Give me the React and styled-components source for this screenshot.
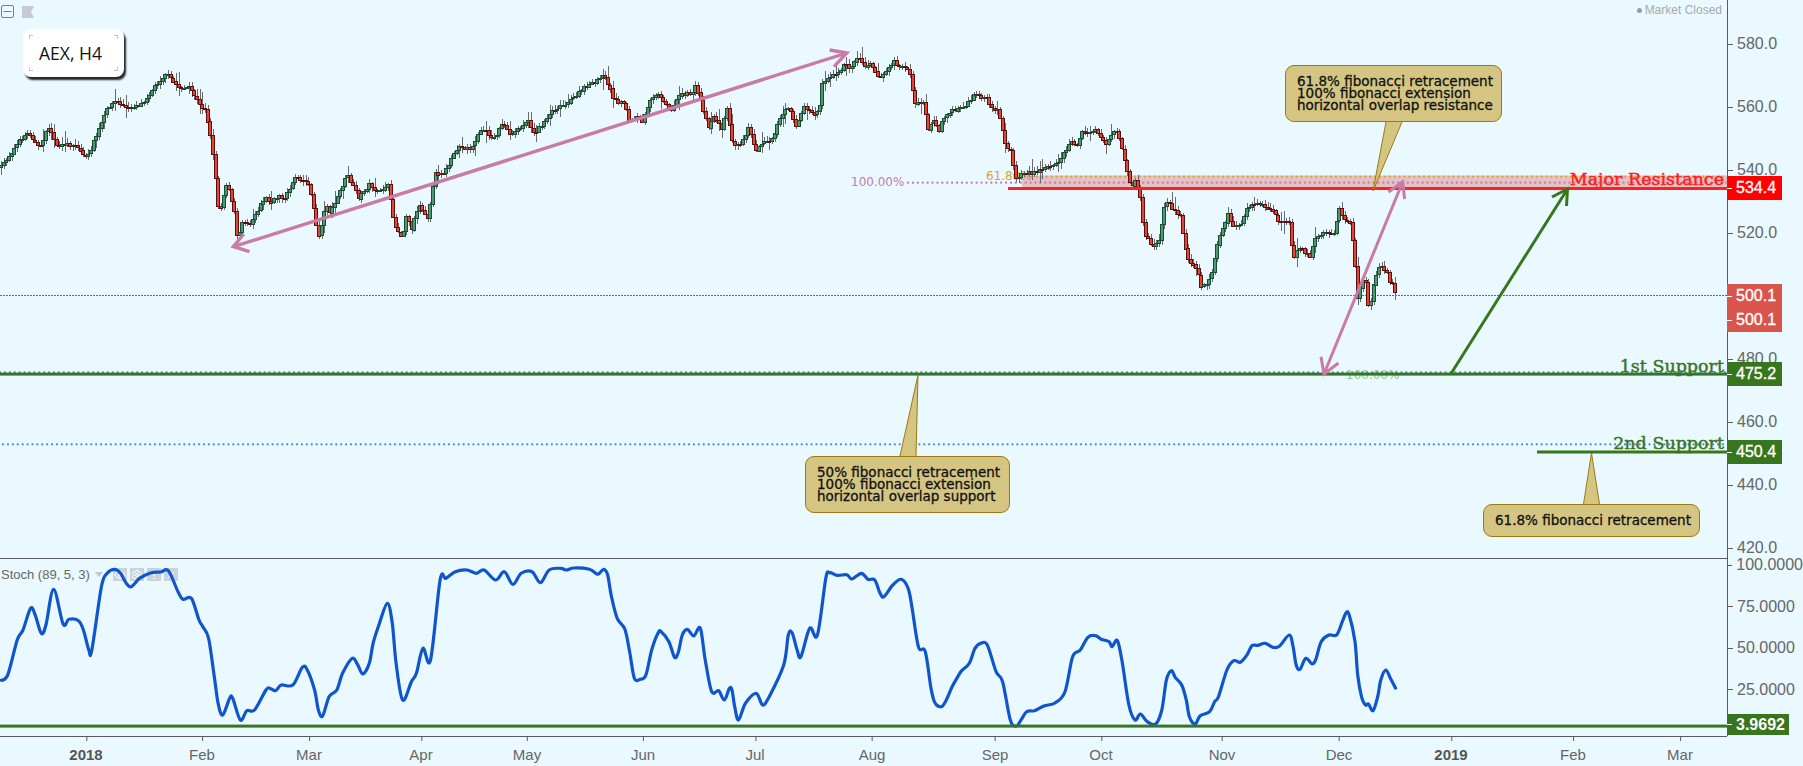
import React from "react";
import styled, { createGlobalStyle } from "styled-components";
import { Eye, Settings, MoreVertical, X } from "lucide-react";

const colors = {
    background: "#e9f9ff",
    line: "#5a5a5a",
    text: "#666666",
    pink: "#c97ba6",
    green: "#38761d",
    red: "#ff2020",
    blue: "#4a86e8",
    gold: "#e0a030",
    note: "#d4c682",
    noteBorder: "#9c7a10",
    candleUp: "#4c9a72",
    candleUpEdge: "#1c4a32",
    candleDown: "#e8452f",
    candleDownEdge: "#5a1010",
};

const GlobalStyle = createGlobalStyle`
    html, body {
        margin: 0;
        padding: 0;
        background: ${colors.background};
        overflow: hidden;
    }
    body {
        font-family: "Liberation Sans", Arial, sans-serif;
    }
`;

// the picture was read off zoomed crops, so keep points in crop units and scale them here
const crop = (offX, offY, sx, pts) => pts.map(([x, y]) => [offX + x / sx, offY + y / 3]);

const pricePath = [
    ...crop(0, 0, 2.613, [[0,500],[25,460],[60,405],[75,400],[100,445],[125,380],[150,445],[165,430],[195,435],[225,475],[250,405],[280,320],[300,300],[330,325],[370,308],[400,260],[430,220],[465,262],[495,265],[520,315],[535,325],[555,465],[570,640],[590,545],[610,640],[618,720],[630,660],[650,670],[690,590],[705,610],[730,580],[740,600],[770,525],[805,550],[830,710],[850,610],[860,640],[905,525],[935,590],[965,550],[985,580],[1010,550],[1030,680],[1050,710],[1060,640],[1072,690],[1092,610],[1115,650],[1135,520],[1160,515],[1195,440],[1230,445],[1255,385],[1290,415],[1310,365],[1330,405],[1375,360],[1395,400],[1440,330],[1490,300],[1530,255],[1550,250]]),
    ...crop(600, 0, 2.613, [[0,225],[15,240],[35,300],[65,310],[70,365],[100,350],[105,380],[128,295],[145,280],[165,300],[183,335],[205,280],[235,280],[248,255],[265,320],[280,380],[295,345],[315,385],[330,325],[345,430],[365,430],[385,385],[405,450],[425,420],[445,420],[470,350],[492,315],[510,380],[530,320],[558,340],[570,330],[580,240],[605,225],[620,220],[635,190],[650,205],[670,170],[690,195],[705,185],[728,235],[765,185],[790,205],[805,205],[820,310],[845,305],[855,395],[870,355],[885,395],[890,360],[920,330],[955,315],[975,285],[1005,290],[1025,335],[1040,330],[1055,430],[1070,450],[1085,540],[1100,515],[1130,520],[1155,505],[1200,480],[1225,425],[1245,430],[1255,395],[1280,400],[1290,385],[1320,430],[1340,395],[1350,400],[1370,490],[1385,565],[1395,540],[1410,590],[1420,700],[1445,740],[1460,715],[1475,600],[1515,650],[1530,770],[1555,800]]),
    ...crop(1200, 0, 2.6, [[3,864],[16,846],[29,816],[45,720],[70,640],[80,675],[105,675],[120,620],[150,610],[180,625],[205,665],[228,665],[240,780],[255,740],[285,770],[295,715],[320,695],[345,700],[360,625],[372,660],[388,665]]),
    ...[[0,85],[10,170],[20,300],[32,240],[45,250],[55,335],[65,270],[78,210],[88,195],[105,210],[115,240],[125,255],[135,288]].map(([x, y]) => [1350 + x / 3, 200 + y / 3]),
];

const stochPath = [
    ...crop(0, 550, 2.613, [[0,392],[20,375],[45,270],[60,240],[80,175],[92,195],[108,250],[120,225],[140,118],[165,222],[180,208],[205,212],[218,240],[232,300],[240,300],[265,110],[280,70],[300,58],[315,70],[330,100],[343,110],[365,85],[395,68],[420,66],[440,62],[465,125],[478,148],[500,145],[520,210],[530,230],[545,265],[560,380],[570,460],[582,495],[600,445],[608,445],[628,510],[645,482],[665,480],[695,420],[705,415],[720,422],[735,405],[765,405],[790,352],[803,360],[822,420],[832,480],[843,498],[860,440],[880,420],[895,370],[920,325],[935,345],[948,372],[965,340],[975,280],[990,225],[1012,160],[1025,220],[1035,340],[1052,450],[1075,395],[1088,370],[1105,295],[1125,330],[1150,90],[1165,85],[1190,65],[1220,60],[1245,70],[1265,60],[1295,90],[1318,65],[1340,103],[1362,70],[1390,65],[1412,98],[1435,60],[1465,55],[1480,60],[1500,54],[1540,58],[1560,72]]),
    ...crop(600, 550, 2.613, [[0,68],[10,58],[20,75],[30,140],[45,205],[65,238],[78,310],[90,385],[105,388],[120,375],[135,300],[152,248],[160,245],[180,275],[195,322],[205,305],[215,255],[228,238],[245,258],[262,235],[275,330],[292,425],[310,422],[325,450],[338,415],[345,420],[352,470],[362,510],[380,460],[408,430],[425,465],[442,440],[480,345],[492,255],[502,248],[515,300],[525,320],[548,235],[568,255],[590,85],[600,68],[620,76],[645,74],[658,87],[683,70],[700,88],[718,90],[732,130],[742,140],[765,105],[787,88],[805,115],[815,170],[832,290],[850,305],[865,415],[875,458],[892,470],[905,450],[920,410],[935,380],[945,362],[965,340],[980,295],[995,280],[1012,285],[1035,365],[1052,395],[1072,510],[1088,528],[1100,510],[1115,485],[1135,482],[1160,468],[1190,458],[1215,425],[1235,320],[1255,300],[1275,262],[1295,257],[1310,268],[1330,275],[1338,290],[1352,272],[1365,340],[1382,465],[1398,510],[1412,492],[1430,515],[1452,522],[1468,480],[1480,390],[1493,362],[1503,382],[1520,405],[1532,450],[1540,500],[1555,522]]),
    ...crop(1200, 550, 2.6, [[0,498],[25,485],[38,455],[48,440],[70,360],[88,332],[105,337],[122,315],[135,287],[150,286],[170,280],[190,292],[207,288],[232,255],[242,290],[250,345],[260,358],[275,325],[292,342],[302,325],[315,275],[335,255],[355,255],[370,215],[380,188],[388,195],[403,275],[410,375],[420,440],[430,465],[438,462],[450,482],[462,440],[470,390],[483,360],[495,385],[510,418]]),
];

const priceAt = (x) => {
    for (let i = 1; i < pricePath.length; i++) {
        const [x0, y0] = pricePath[i - 1];
        const [x1, y1] = pricePath[i];
        if (x <= x1) return y0 + ((y1 - y0) * (x - x0)) / (x1 - x0 || 1);
    }
    return pricePath[pricePath.length - 1][1];
};

const makeCandles = () => {
    let seed = 7;
    const rnd = () => {
        seed = (seed * 16807) % 2147483647;
        return seed / 2147483647;
    };
    const list = [];
    const step = 2.65;
    let prev = priceAt(0);
    for (let x = 0; x <= 1395; x += step) {
        const close = priceAt(x) + (rnd() - 0.5) * 3.6;
        const top = Math.min(prev, close);
        const bottom = Math.max(prev, close);
        const big = rnd() > 0.8 ? 8 : 0;
        list.push({
            x: Math.round(x) + 0.5,
            top: Math.round(top) + 0.5,
            height: Math.max(1, Math.round(bottom - top)),
            high: top - 1 - rnd() * 4 - big * rnd(),
            low: bottom + 1 + rnd() * 4 + big * rnd(),
            up: close < prev,
        });
        prev = close;
    }
    return list;
};

const candles = makeCandles();
const toPoints = (pts) => pts.map(([x, y]) => `${x.toFixed(1)},${y.toFixed(1)}`).join(" ");

// catmull-rom, the stochastic line in the picture has no corners
const toCurve = (pts) => {
    let d = `M${pts[0][0].toFixed(1)} ${pts[0][1].toFixed(1)}`;
    for (let i = 0; i < pts.length - 1; i++) {
        const p0 = pts[i - 1] || pts[i];
        const p1 = pts[i];
        const p2 = pts[i + 1];
        const p3 = pts[i + 2] || p2;
        const c1x = p1[0] + (p2[0] - p0[0]) / 6;
        const c1y = p1[1] + (p2[1] - p0[1]) / 6;
        const c2x = p2[0] - (p3[0] - p1[0]) / 6;
        const c2y = p2[1] - (p3[1] - p1[1]) / 6;
        d += `C${c1x.toFixed(1)} ${c1y.toFixed(1)} ${c2x.toFixed(1)} ${c2y.toFixed(1)} ${p2[0].toFixed(1)} ${p2[1].toFixed(1)}`;
    }
    return d;
};

const priceTicks = ["580.0", "560.0", "540.0", "520.0", "500.0", "480.0", "460.0", "440.0", "420.0"];
const stochTicks = ["100.0000", "75.0000", "50.0000", "25.0000"];
const timeTicks = [
    { x: 86, label: "2018", strong: true },
    { x: 202, label: "Feb" },
    { x: 309, label: "Mar" },
    { x: 421, label: "Apr" },
    { x: 527, label: "May" },
    { x: 643, label: "Jun" },
    { x: 755, label: "Jul" },
    { x: 872, label: "Aug" },
    { x: 995, label: "Sep" },
    { x: 1101, label: "Oct" },
    { x: 1222, label: "Nov" },
    { x: 1339, label: "Dec" },
    { x: 1451, label: "2019", strong: true },
    { x: 1573, label: "Feb" },
    { x: 1680, label: "Mar" },
];

const Page = styled.div`
    width: 1803px;
    height: 766px;
    display: grid;
    grid-template-columns: 1727px 76px;
    grid-template-rows: 559px 177px 30px;
    background: ${colors.background};
    overflow: hidden;
`;

const Pane = styled.div`
    position: relative;
    box-sizing: border-box;
    border-bottom: ${(p) => (p.$ruled ? `1px solid ${colors.line}` : "none")};
`;

const ChartSvg = styled.svg`
    position: relative;
    z-index: 1;
    display: block;
    overflow: visible;
`;

const PaneTools = styled.div`
    position: absolute;
    left: 1px;
    top: 5px;
    display: flex;
    align-items: center;
    gap: 8px;
`;

const Legend = styled.div`
    position: absolute;
    z-index: 2;
    left: 23px;
    top: 29px;
    width: 101px;
    height: 48px;
    box-sizing: border-box;
    padding-right: 6px;
    display: flex;
    align-items: center;
    justify-content: center;
    background: #ffffff;
    border-radius: 8px;
    box-shadow: 2px 3px 2px rgba(0, 0, 0, 0.85);
    font-family: "Open Sans", sans-serif;
    font-size: 17.5px;
    color: #111111;
`;

const Corner = styled.span`
    position: absolute;
    width: 3px;
    height: 3px;
    ${(p) => p.$v}: 6px;
    ${(p) => p.$h}: 6px;
    border-${(p) => p.$v}: 1px solid #c4c4c4;
    border-${(p) => p.$h}: 1px solid #c4c4c4;
`;

const MarketStatus = styled.div`
    position: absolute;
    right: 5px;
    top: 3px;
    display: flex;
    align-items: center;
    gap: 3px;
    font-size: 12px;
    line-height: 14px;
    color: #a9a9a9;
    &::before {
        content: "";
        width: 5px;
        height: 5px;
        border-radius: 50%;
        background: #9b9b9b;
    }
`;

const FibLabel = styled.div`
    position: absolute;
    z-index: 0;
    left: ${(p) => p.$x}px;
    top: ${(p) => p.$y}px;
    font-family: "DejaVu Sans", sans-serif;
    font-size: 12px;
    line-height: 14px;
    color: ${(p) => p.$color};
`;

const LevelLabel = styled.div`
    position: absolute;
    z-index: 2;
    right: ${(p) => p.$right}px;
    top: ${(p) => p.$y}px;
    font-family: "DejaVu Serif", serif;
    font-size: 17.5px;
    line-height: 20px;
    white-space: nowrap;
    color: ${(p) => p.$color};
    -webkit-text-stroke: 0.45px ${(p) => p.$color};
`;

const Callout = styled.div`
    position: absolute;
    z-index: 2;
    box-sizing: border-box;
    left: ${(p) => p.$x}px;
    top: ${(p) => p.$y}px;
    width: ${(p) => p.$w}px;
    height: ${(p) => p.$h}px;
    padding: ${(p) => p.$padTop}px 0 0 11px;
    background: ${colors.note};
    border: 1px solid ${colors.noteBorder};
    border-radius: 9px;
    font-family: "DejaVu Sans", sans-serif;
    font-size: 13.5px;
    line-height: 12px;
    white-space: nowrap;
    color: #111111;
    -webkit-text-stroke: 0.3px #111111;
`;

const TailSvg = styled.svg`
    position: absolute;
    left: -1px;
    top: -1px;
    width: 1px;
    height: 1px;
    overflow: visible;
`;

const Axis = styled.div`
    position: relative;
    box-sizing: border-box;
    border-left: 1px solid ${colors.line};
    font-size: 16px;
    color: ${colors.text};
`;

const PriceScale = styled.div`
    display: flex;
    flex-direction: column;
    padding-top: 12.5px;
`;

const PriceTick = styled.div`
    height: 63px;
    display: flex;
    align-items: center;
    gap: 4px;
    &::before {
        content: "";
        width: 5px;
        height: 1px;
        background: ${colors.line};
    }
`;

const StochScale = styled.div`
    display: flex;
    flex-direction: column;
    gap: 29.67px;
`;

const StochTick = styled(PriceTick)`
    height: 12px;
    white-space: nowrap;
`;

const PriceTag = styled.div`
    position: absolute;
    left: -1px;
    top: ${(p) => p.$y}px;
    width: ${(p) => p.$w || 55}px;
    display: flex;
    flex-direction: column;
    background: ${(p) => p.$bg};
    color: #ffffff;
    font-weight: ${(p) => (p.$bold ? 700 : 400)};
    -webkit-text-stroke: ${(p) => (p.$bold ? 0 : 0.3)}px #ffffff;
`;

const TagRow = styled.div`
    height: ${(p) => p.$h || 24}px;
    display: flex;
    align-items: center;
    gap: 4px;
    &::before {
        content: "";
        width: 5px;
        height: 1px;
        background: #ffffff;
    }
`;

const StochLegend = styled.div`
    position: absolute;
    z-index: 0;
    left: 1px;
    top: 8px;
    display: flex;
    align-items: center;
    font-size: 13px;
    line-height: 15px;
    color: #666666;
`;

const Caret = styled.span`
    width: 0;
    height: 0;
    margin: 0 10px 0 5px;
    border-left: 4px solid transparent;
    border-right: 4px solid transparent;
    border-top: 5px solid #c2c7cb;
`;

const LegendButtons = styled.div`
    display: flex;
    gap: 3px;
`;

const LegendButton = styled.div`
    width: 14px;
    height: 13px;
    display: flex;
    align-items: center;
    justify-content: center;
    background: #c9d3da;
    color: #ffffff;
`;

const TimeAxis = styled.div`
    position: relative;
    box-sizing: border-box;
    border-top: 1px solid ${colors.line};
`;

const TimeTick = styled.div`
    position: absolute;
    top: 0;
    left: ${(p) => p.$x}px;
    transform: translateX(-50%);
    padding-top: 9px;
    font-size: 15px;
    line-height: 18px;
    font-weight: ${(p) => (p.$strong ? 700 : 400)};
    color: ${(p) => (p.$strong ? "#555555" : colors.text)};
    &::before {
        content: "";
        position: absolute;
        left: 50%;
        top: 0;
        width: 1px;
        height: 4px;
        background: ${colors.line};
    }
`;

const Tail = ({ x, y, points }) => {
    const rel = points.map(([px, py]) => [px - x, py - y]);
    return (
        <TailSvg>
            <polygon points={toPoints(rel)} fill={colors.note} />
            <polyline points={toPoints(rel)} fill="none" stroke={colors.noteBorder} strokeWidth="1" />
        </TailSvg>
    );
};

const DotLine = ({ x1, x2, y, color, width = 2.2, gap = 4.8 }) => (
    <line
        x1={x1}
        x2={x2}
        y1={y}
        y2={y}
        stroke={color}
        strokeWidth={width}
        strokeDasharray={`0.1 ${gap}`}
        strokeLinecap="round"
    />
);

const PriceDrawing = () => (
    <ChartSvg width="1727" height="558">
        <rect x="1022" y="175.5" width="705" height="12.5" fill="#dc7878" opacity="0.42" />
        <DotLine x1={1032} x2={1727} y={176.7} color={colors.gold} />
        <DotLine x1={908} x2={1727} y={182.7} color={colors.pink} />
        <DotLine x1={0} x2={1727} y={372.3} color={colors.blue} />
        <DotLine x1={3} x2={1727} y={444.3} color={colors.blue} />
        <line x1="0" x2="1727" y1="295.5" y2="295.5" stroke="#d94030" strokeWidth="1" strokeDasharray="2 1" />

        <path
            d={candles.map((c) => `M${c.x + 0.5} ${c.high.toFixed(1)}V${c.low.toFixed(1)}`).join("")}
            stroke="#6a6a6a"
            strokeWidth="1"
            fill="none"
            shapeRendering="crispEdges"
        />
        {candles.map((c) => (
            <rect
                key={c.x}
                x={c.x - 1}
                y={c.top}
                width="3"
                height={c.height}
                fill={c.up ? colors.candleUp : colors.candleDown}
                stroke={c.up ? colors.candleUpEdge : colors.candleDownEdge}
                strokeWidth="1"
                shapeRendering="crispEdges"
            />
        ))}

        <rect x="1008" y="187" width="719" height="3" fill={colors.red} />
        <rect x="0" y="372.6" width="1727" height="3" fill={colors.green} />
        <rect x="1537" y="450.5" width="190" height="3" fill={colors.green} />

        <g fill="none" stroke={colors.pink} strokeWidth="3.4">
            <path d="M233.4 246.7L846.8 53" />
            <path d="M243.8 234L233.4 246.7L249.5 251.7" />
            <path d="M829.6 50L846.8 53L834 66.7" />
            <path d="M1324 374L1402.7 181.7" strokeWidth="3" />
            <path d="M1388.5 192L1402.7 181.7L1404.6 199" strokeWidth="3" />
            <path d="M1321 356.7L1324 374L1338.5 363" strokeWidth="3" />
        </g>
        <g fill="none" stroke={colors.green} strokeWidth="3">
            <path d="M1450.8 374L1567.5 189" />
            <path d="M1552 197L1567.5 189L1566.5 206" />
        </g>
    </ChartSvg>
);

const StochDrawing = () => (
    <ChartSvg width="1727" height="177">
        <g transform="translate(0,-559)">
            <path d={toCurve(stochPath)} fill="none" stroke="#1155cc" strokeWidth="3.2" strokeLinejoin="round" />
            <rect x="0" y="724.6" width="1727" height="3" fill={colors.green} />
        </g>
    </ChartSvg>
);

const App = () => (
    <Page>
        <GlobalStyle />

        <Pane $ruled>
            <PaneTools>
                <svg width="13" height="13" viewBox="0 0 13 13">
                    <rect x="0.5" y="0.5" width="12" height="12" rx="1.5" fill="none" stroke="#7d7d7d" />
                    <path d="M2.5 6.5h8" stroke="#7d7d7d" />
                </svg>
                <svg width="12" height="12" viewBox="0 0 12 12">
                    <path d="M0 0h12l-3 6 3 6H0z" fill="#c5c9d3" />
                </svg>
            </PaneTools>
            <Legend>
                AEX, H4
                <Corner $v="top" $h="left" />
                <Corner $v="top" $h="right" />
                <Corner $v="bottom" $h="left" />
                <Corner $v="bottom" $h="right" />
            </Legend>
            <MarketStatus>Market Closed</MarketStatus>

            <FibLabel $x={851} $y={175} $color={colors.pink}>100.00%</FibLabel>
            <FibLabel $x={986} $y={169} $color={colors.gold}>61.80%</FibLabel>
            <FibLabel $x={1346} $y={368} $color="#93c987">100.00%</FibLabel>

            <PriceDrawing />

            <LevelLabel $right={3} $y={169} $color={colors.red}>Major Resistance</LevelLabel>
            <LevelLabel $right={3} $y={356} $color={colors.green}>1st Support</LevelLabel>
            <LevelLabel $right={3} $y={433} $color={colors.green}>2nd Support</LevelLabel>

            <Callout $x={1285} $y={65} $w={217} $h={57} $padTop={9}>
                61.8% fibonacci retracement
                <br />
                100% fibonacci extension
                <br />
                horizontal overlap resistance
                <Tail x={1285} y={65} points={[[1386, 122], [1373, 191], [1402, 122]]} />
            </Callout>
            <Callout $x={805} $y={456} $w={205} $h={57} $padTop={9}>
                50% fibonacci retracement
                <br />
                100% fibonacci extension
                <br />
                horizontal overlap support
                <Tail x={805} y={456} points={[[900, 456], [918, 375], [916, 456]]} />
            </Callout>
            <Callout $x={1483} $y={504} $w={217} $h={33} $padTop={9}>
                61.8% fibonacci retracement
                <Tail x={1483} y={504} points={[[1583.5, 504], [1591.5, 453], [1599.5, 504]]} />
            </Callout>
        </Pane>

        <Axis>
            <PriceScale>
                {priceTicks.map((tick) => (
                    <PriceTick key={tick}>{tick}</PriceTick>
                ))}
            </PriceScale>
            <PriceTag $y={176} $bg="#ff0000">
                <TagRow>534.4</TagRow>
            </PriceTag>
            <PriceTag $y={284} $bg="#d9544a">
                <TagRow>500.1</TagRow>
                <TagRow>500.1</TagRow>
            </PriceTag>
            <PriceTag $y={362} $bg={colors.green}>
                <TagRow>475.2</TagRow>
            </PriceTag>
            <PriceTag $y={440} $bg={colors.green}>
                <TagRow>450.4</TagRow>
            </PriceTag>
        </Axis>

        <Pane>
            <StochLegend>
                Stoch (89, 5, 3)
                <Caret />
                <LegendButtons>
                    <LegendButton><Eye size={12} /></LegendButton>
                    <LegendButton><Settings size={12} /></LegendButton>
                    <LegendButton><MoreVertical size={12} /></LegendButton>
                    <LegendButton><X size={12} /></LegendButton>
                </LegendButtons>
            </StochLegend>
            <StochDrawing />
        </Pane>

        <Axis>
            <StochScale>
                {stochTicks.map((tick) => (
                    <StochTick key={tick}>{tick}</StochTick>
                ))}
            </StochScale>
            <PriceTag $y={155} $w={62} $bg={colors.green} $bold>
                <TagRow $h={21}>3.9692</TagRow>
            </PriceTag>
        </Axis>

        <TimeAxis>
            {timeTicks.map((tick) => (
                <TimeTick key={tick.x} $x={tick.x} $strong={tick.strong}>{tick.label}</TimeTick>
            ))}
        </TimeAxis>
        <div />
    </Page>
);

export default App;
